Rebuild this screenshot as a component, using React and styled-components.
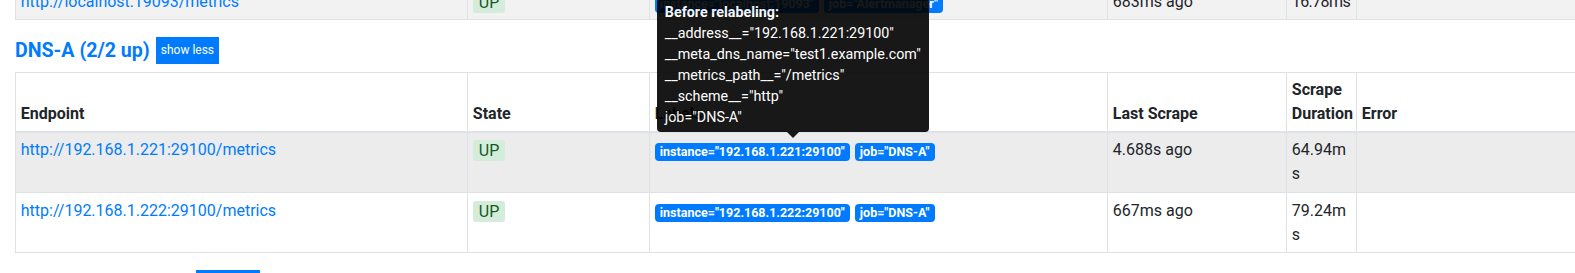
import React from 'react';
import styled, { createGlobalStyle } from 'styled-components';

const Global = createGlobalStyle`
  html, body { margin: 0; padding: 0; background: #fff; overflow: hidden; }
  body {
    font-family: Roboto, "Liberation Sans", Arial, sans-serif;
    font-size: 16px;
    line-height: 24px;
    color: #212529;
  }
`;

const Page = styled.div`
  padding: 0 15px;
  margin-top: -17px;
`;

const Section = styled.section``;

const Heading = styled.h2`
  display: flex;
  align-items: center;
  gap: 6px;
  margin: 17px 0 8px;
  font-size: 19.6px;
  font-weight: 700;
  line-height: 27px;
  color: #007bff;
`;

const ToggleButton = styled.button`
  height: 27px;
  padding: 0 5px;
  border: 0;
  border-radius: 0;
  background: #007bff;
  color: #fff;
  font-family: Roboto, "Liberation Sans", Arial, sans-serif;
  font-size: 12px;
  font-weight: 400;
  line-height: 27px;
`;

const Table = styled.table`
  width: 1700px;
  table-layout: fixed;
  border-collapse: collapse;
`;

const Th = styled.th`
  padding: 4.8px;
  text-align: left;
  vertical-align: bottom;
  font-weight: 700;
  border: 1px solid #dee2e6;
  border-bottom-width: 2px;
`;

const Row = styled.tr`
  background: ${(p) => (p.$shade === 'stripe' ? '#f2f2f2' : p.$shade === 'hover' ? '#ececec' : '#fff')};
`;

const Td = styled.td`
  padding: 5.6px 4.8px;
  vertical-align: top;
  border: 1px solid #dee2e6;
  word-break: ${(p) => (p.$breakAll ? 'break-all' : 'normal')};
  letter-spacing: ${(p) => (p.$tight ? '-0.6px' : 'normal')};
  white-space: ${(p) => (p.$tight ? 'nowrap' : 'normal')};
`;

const Link = styled.a`
  color: #007bff;
  text-decoration: none;
`;

const StateBadge = styled.span`
  display: inline-block;
  padding: 2px 6px;
  font-size: 16px;
  line-height: 17px;
  border-radius: 3px;
  color: #155724;
  background: #d4edda;
  position: relative;
  top: 1px;
`;

const LabelsWrap = styled.div`
  position: relative;
  display: flex;
  flex-wrap: wrap;
  gap: 5px;
  margin-top: 5px;
`;

const Label = styled.span`
  display: inline-block;
  padding: 3px 5px;
  font-size: 12.5px;
  font-weight: 700;
  line-height: 12px;
  color: #fff;
  background: #007bff;
  border-radius: 4px;
  white-space: nowrap;
`;

const Tooltip = styled.div`
  position: absolute;
  left: 2px;
  bottom: calc(100% + 5px);
  padding-bottom: 6px;
  opacity: 0.9;
  z-index: 10;
`;

const TooltipInner = styled.div`
  padding: 4px 8px;
  background: #000;
  color: #fff;
  border-radius: 4px;
  font-size: 14.3px;
  line-height: 21px;
  white-space: nowrap;
`;

const TooltipTitle = styled.div`
  font-weight: 700;
`;

const Arrow = styled.span`
  position: absolute;
  bottom: 0;
  left: 130px;
  width: 0;
  height: 0;
  border-style: solid;
  border-width: 6px 6.4px 0;
  border-color: #000 transparent transparent;
`;

const COLS = [452, 182, 458, 179, 70, 359];

function Cols() {
  return (
    <colgroup>
      {COLS.map((w, i) => (
        <col key={i} style={{ width: w }} />
      ))}
    </colgroup>
  );
}

function Header() {
  return (
    <thead>
      <tr>
        <Th>Endpoint</Th>
        <Th>State</Th>
        <Th>Labels</Th>
        <Th>Last Scrape</Th>
        <Th>Scrape Duration</Th>
        <Th>Error</Th>
      </tr>
    </thead>
  );
}

function TargetRow({ t, shade, tight, tooltip }) {
  return (
    <Row $shade={shade}>
      <Td>
        <Link href="#">{t.endpoint}</Link>
      </Td>
      <Td>
        <StateBadge>UP</StateBadge>
      </Td>
      <Td>
        <LabelsWrap>
          {tooltip && (
            <Tooltip>
              <TooltipInner>
                <TooltipTitle>Before relabeling:</TooltipTitle>
                {tooltip.map((l) => (
                  <div key={l}>{l}</div>
                ))}
              </TooltipInner>
              <Arrow />
            </Tooltip>
          )}
          {t.labels.map((l) => (
            <Label key={l}>{l}</Label>
          ))}
        </LabelsWrap>
      </Td>
      <Td>{t.last}</Td>
      <Td $breakAll $tight={tight}>{t.duration}</Td>
      <Td></Td>
    </Row>
  );
}

const before = [
  '__address__="192.168.1.221:29100"',
  '__meta_dns_name="test1.example.com"',
  '__metrics_path__="/metrics"',
  '__scheme__="http"',
  'job="DNS-A"',
];

const dnsTargets = [
  {
    endpoint: 'http://192.168.1.221:29100/metrics',
    labels: ['instance="192.168.1.221:29100"', 'job="DNS-A"'],
    last: '4.688s ago',
    duration: '64.94ms',
  },
  {
    endpoint: 'http://192.168.1.222:29100/metrics',
    labels: ['instance="192.168.1.222:29100"', 'job="DNS-A"'],
    last: '667ms ago',
    duration: '79.24ms',
  },
];

const prevTarget = {
  endpoint: 'http://localhost:19093/metrics',
  labels: ['instance="localhost:19093"', 'job="Alertmanager"'],
  last: '683ms ago',
  duration: '16.78ms',
};

export default function App() {
  return (
    <>
      <Global />
      <Page>
        <Section>
          <Table>
            <Cols />
            <tbody>
              <TargetRow t={prevTarget} shade="stripe" tight />
            </tbody>
          </Table>
        </Section>
        <Section>
          <Heading>
            DNS-A (2/2 up)
            <ToggleButton>show less</ToggleButton>
          </Heading>
          <Table>
            <Cols />
            <Header />
            <tbody>
              <TargetRow t={dnsTargets[0]} shade="hover" tooltip={before} />
              <TargetRow t={dnsTargets[1]} />
            </tbody>
          </Table>
        </Section>
        <Section>
          <Heading>
            file_sd_test (2/2 up)
            <ToggleButton>show less</ToggleButton>
          </Heading>
        </Section>
      </Page>
    </>
  );
}
